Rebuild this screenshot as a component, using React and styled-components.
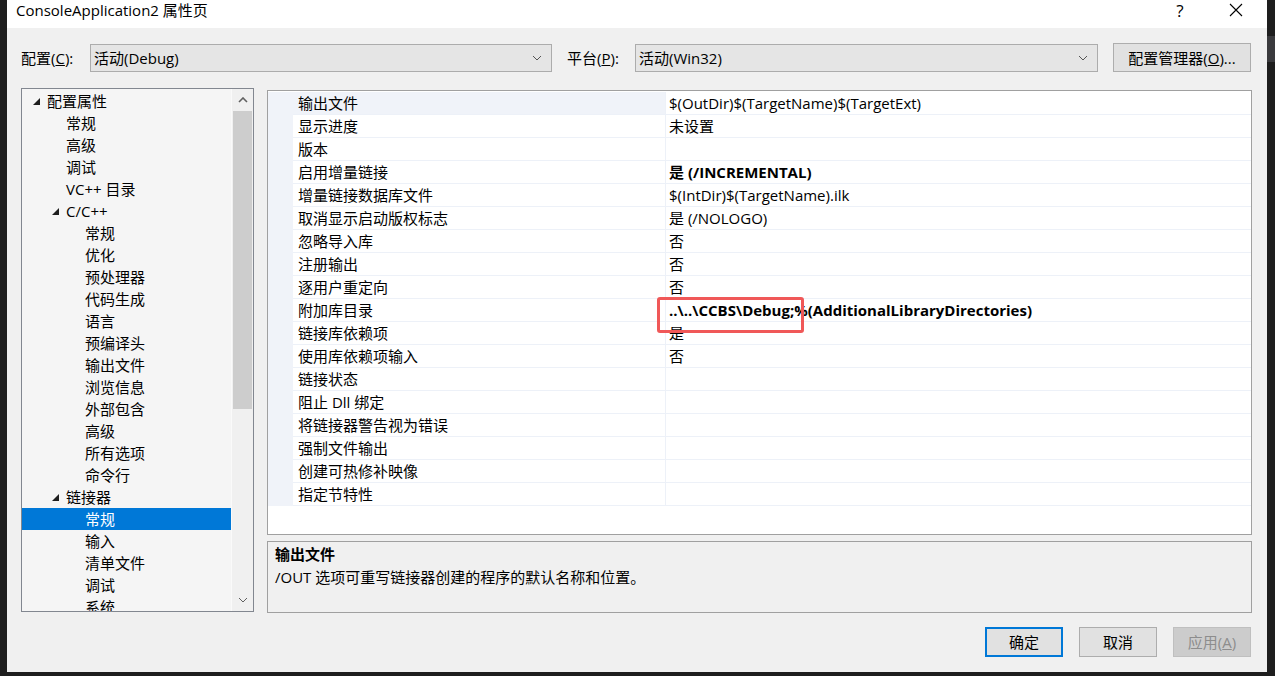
import React from "react";
import styled, { createGlobalStyle } from "styled-components";

const Global = createGlobalStyle`
  html, body {
    margin: 0;
    padding: 0;
    background: #1e1e1e;
  }
  body {
    font-family: "Open Sans", "Noto Sans CJK SC", sans-serif;
    font-size: 15px;
    color: #000;
  }
  * { box-sizing: border-box; }
`;

const Page = styled.div`
  display: flex;
  width: 1275px;
  height: 676px;
  overflow: hidden;
  background: #1e1e1e;
`;

const EditorEdge = styled.div`
  width: ${(p) => p.$w}px;
  flex-shrink: 0;
  background: #1e1e1e;
  display: flex;
  flex-direction: column;
`;

const EdgeTab = styled.div`
  margin-top: 36px;
  height: 26px;
  background: #3a3a3d;
`;

const Dialog = styled.div`
  width: 1260px;
  flex-shrink: 0;
  height: 672px;
  background: #f0f0f0;
  display: flex;
  flex-direction: column;
`;

const TitleBar = styled.div`
  height: 28px;
  background: #fff;
  display: flex;
  align-items: center;
  padding: 0 3px 0 9px;
`;

const Title = styled.div`
  font-size: 15px;
  line-height: 20px;
  margin-top: -8px;
`;

const TitleButton = styled.div`
  width: 56px;
  height: 28px;
  display: flex;
  align-items: center;
  justify-content: center;
  font-size: 17px;
  margin-top: -8px;
  ${(p) => p.$first && "margin-left: auto;"}
`;

const Body = styled.div`
  flex: 1;
  display: flex;
  flex-direction: column;
  padding: 15px 15px 0 14px;
`;

const ConfigRow = styled.div`
  display: flex;
  align-items: center;
  height: 29px;
`;

const Label = styled.div`
  width: ${(p) => p.$w}px;
  flex-shrink: 0;
  line-height: 22px;
`;

const Combo = styled.div`
  width: ${(p) => p.$w}px;
  flex-shrink: 0;
  height: 28px;
  background: #e5e5e5;
  border: 1px solid #acacac;
  display: flex;
  align-items: center;
  padding: 0 9px 0 3px;
  margin-right: 15px;
  line-height: 22px;
  span { flex: 1; }
`;

const Button = styled.div`
  width: ${(p) => p.$w || 78}px;
  flex-shrink: 0;
  height: ${(p) => p.$h || 30}px;
  display: flex;
  align-items: center;
  justify-content: center;
  background: ${(p) => (p.$disabled ? "#cccccc" : "#e1e1e1")};
  border: ${(p) =>
    p.$default ? "2px solid #0078d7" : p.$disabled ? "1px solid #bfbfbf" : "1px solid #adadad"};
  color: ${(p) => (p.$disabled ? "#8d8d8d" : "#000")};
  line-height: 22px;
`;

const Main = styled.div`
  margin-top: 16px;
  display: flex;
  gap: 13px;
  align-items: flex-start;
`;

const Tree = styled.div`
  width: 233px;
  flex-shrink: 0;
  height: 524px;
  border: 1px solid #828790;
  background: #f5f5f5;
  display: flex;
  overflow: hidden;
`;

const TreeList = styled.div`
  flex: 1;
  overflow: hidden;
  padding: 1px 0 0 0;
`;

const TreeRow = styled.div`
  height: 22px;
  line-height: 22px;
  display: flex;
  align-items: center;
  padding-left: ${(p) => 11 + (p.$level - 1) * 19}px;
  background: ${(p) => (p.$selected ? "#0078d7" : "transparent")};
  color: ${(p) => (p.$selected ? "#fff" : "#000")};
  white-space: nowrap;
`;

const Twisty = styled.span`
  width: 14px;
  flex-shrink: 0;
  display: flex;
  align-items: center;
`;

const ScrollBar = styled.div`
  width: 22px;
  flex-shrink: 0;
  background: #f0f0f0;
  border-left: 1px solid #fafafa;
  display: flex;
  flex-direction: column;
  align-items: center;
`;

const ScrollArrow = styled.div`
  height: 22px;
  width: 100%;
  display: flex;
  align-items: center;
  justify-content: center;
`;

const ScrollThumb = styled.div`
  width: 19px;
  height: 298px;
  background: #cdcdcd;
`;

const ScrollSpacer = styled.div`
  flex: 1;
`;

const RightCol = styled.div`
  width: 985px;
  flex-shrink: 0;
  margin-top: 2px;
  display: flex;
  flex-direction: column;
  gap: 6px;
`;

const Grid = styled.div`
  height: 445px;
  border: 1px solid #a0a0a0;
  background: #fff;
  padding-top: 1px;
  overflow: hidden;
`;

const GridRow = styled.div`
  display: grid;
  grid-template-columns: 25px 373px 1fr;
  height: 23px;
`;

const Gutter = styled.div`
  background: #f0f3f9;
`;

const NameCell = styled.div`
  background: ${(p) => (p.$active ? "#f0f3f9" : "#fff")};
  border-bottom: 1px solid #edf1f8;
  border-right: 1px solid #edf1f8;
  padding-left: 5px;
  line-height: 22px;
  white-space: nowrap;
`;

const ValueCell = styled.div`
  position: relative;
  border-bottom: 1px solid #edf1f8;
  padding-left: 3px;
  line-height: 22px;
  white-space: nowrap;
  font-weight: ${(p) => (p.$bold ? 700 : 400)};
`;

const Highlight = styled.div`
  position: absolute;
  left: -9px;
  top: -2px;
  width: 147px;
  height: 36px;
  border: 3px solid #f05858;
  border-radius: 3px;
  z-index: 2;
`;

const Desc = styled.div`
  height: 72px;
  border: 1px solid #a0a0a0;
  background: #f0f0f0;
  padding: 1px 7px;
  line-height: 23px;
`;

const DescTitle = styled.div`
  font-weight: 700;
`;

const Footer = styled.div`
  display: flex;
  justify-content: flex-end;
  gap: 16px;
  padding: 14px 1px 0 0;
`;

const Chevron = ({ up, color = "#555", w = 10 }) => (
  <svg width={w} height="6" viewBox="0 0 10 6">
    <polyline
      points={up ? "1,5 5,1 9,5" : "1,1 5,5 9,1"}
      fill="none"
      stroke={color}
      strokeWidth={up ? 1.6 : 1}
    />
  </svg>
);

const Triangle = () => (
  <svg width="7" height="7" viewBox="0 0 7 7">
    <polygon points="7,0 7,7 0,7" fill="#1e1e1e" />
  </svg>
);

const CloseIcon = () => (
  <svg width="14" height="14" viewBox="0 0 14 14">
    <path d="M1 1 L13 13 M13 1 L1 13" stroke="#000" strokeWidth="1.1" />
  </svg>
);

const treeItems = [
  { t: "配置属性", l: 1, open: true },
  { t: "常规", l: 2 },
  { t: "高级", l: 2 },
  { t: "调试", l: 2 },
  { t: "VC++ 目录", l: 2 },
  { t: "C/C++", l: 2, open: true },
  { t: "常规", l: 3 },
  { t: "优化", l: 3 },
  { t: "预处理器", l: 3 },
  { t: "代码生成", l: 3 },
  { t: "语言", l: 3 },
  { t: "预编译头", l: 3 },
  { t: "输出文件", l: 3 },
  { t: "浏览信息", l: 3 },
  { t: "外部包含", l: 3 },
  { t: "高级", l: 3 },
  { t: "所有选项", l: 3 },
  { t: "命令行", l: 3 },
  { t: "链接器", l: 2, open: true },
  { t: "常规", l: 3, sel: true },
  { t: "输入", l: 3 },
  { t: "清单文件", l: 3 },
  { t: "调试", l: 3 },
  { t: "系统", l: 3 },
];

const props = [
  ["输出文件", "$(OutDir)$(TargetName)$(TargetExt)"],
  ["显示进度", "未设置"],
  ["版本", ""],
  ["启用增量链接", "是 (/INCREMENTAL)", true],
  ["增量链接数据库文件", "$(IntDir)$(TargetName).ilk"],
  ["取消显示启动版权标志", "是 (/NOLOGO)"],
  ["忽略导入库", "否"],
  ["注册输出", "否"],
  ["逐用户重定向", "否"],
  ["附加库目录", "..\\..\\CCBS\\Debug;%(AdditionalLibraryDirectories)", true, true],
  ["链接库依赖项", "是"],
  ["使用库依赖项输入", "否"],
  ["链接状态", ""],
  ["阻止 Dll 绑定", ""],
  ["将链接器警告视为错误", ""],
  ["强制文件输出", ""],
  ["创建可热修补映像", ""],
  ["指定节特性", ""],
];

export default function App() {
  return (
    <Page>
      <Global />
      <EditorEdge $w={7} />
      <Dialog>
        <TitleBar>
          <Title>ConsoleApplication2 属性页</Title>
          <TitleButton $first>?</TitleButton>
          <TitleButton>
            <CloseIcon />
          </TitleButton>
        </TitleBar>
        <Body>
          <ConfigRow>
            <Label $w={69}>
              配置(<u>C</u>):
            </Label>
            <Combo $w={462}>
              <span>活动(Debug)</span>
              <Chevron />
            </Combo>
            <Label $w={68}>
              平台(<u>P</u>):
            </Label>
            <Combo $w={463}>
              <span>活动(Win32)</span>
              <Chevron />
            </Combo>
            <Button $w={138} $h={29}>
              配置管理器(<u>O</u>)...
            </Button>
          </ConfigRow>

          <Main>
            <Tree>
              <TreeList>
                {treeItems.map((it, i) => (
                  <TreeRow key={i} $level={it.l} $selected={it.sel}>
                    <Twisty>{it.open && <Triangle />}</Twisty>
                    {it.t}
                  </TreeRow>
                ))}
              </TreeList>
              <ScrollBar>
                <ScrollArrow>
                  <Chevron up color="#606060" />
                </ScrollArrow>
                <ScrollThumb />
                <ScrollSpacer />
                <ScrollArrow>
                  <Chevron color="#606060" />
                </ScrollArrow>
              </ScrollBar>
            </Tree>

            <RightCol>
              <Grid>
                {props.map(([name, value, bold, marked], i) => (
                  <GridRow key={i}>
                    <Gutter />
                    <NameCell $active={i === 0}>{name}</NameCell>
                    <ValueCell $bold={bold}>
                      {value}
                      {marked && <Highlight />}
                    </ValueCell>
                  </GridRow>
                ))}
              </Grid>
              <Desc>
                <DescTitle>输出文件</DescTitle>
                <div>/OUT 选项可重写链接器创建的程序的默认名称和位置。</div>
              </Desc>
            </RightCol>
          </Main>

          <Footer>
            <Button $default>确定</Button>
            <Button>取消</Button>
            <Button $disabled>
              应用(<u>A</u>)
            </Button>
          </Footer>
        </Body>
      </Dialog>
      <EditorEdge $w={8}>
        <EdgeTab />
      </EditorEdge>
    </Page>
  );
}
